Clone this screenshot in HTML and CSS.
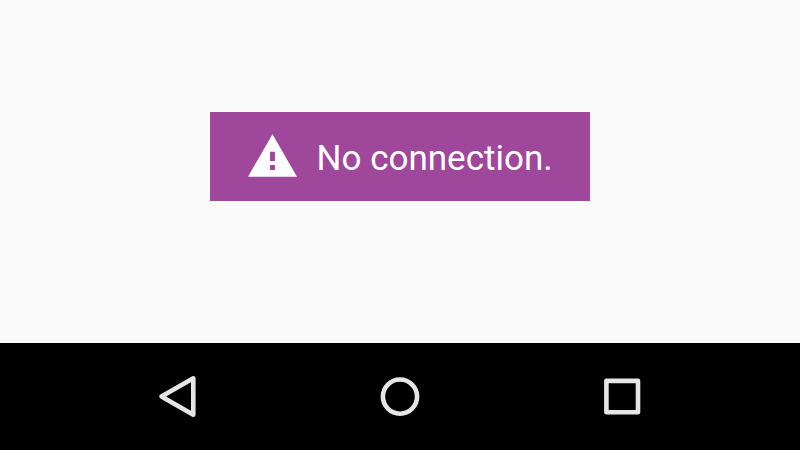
FILE: index.html
```html
<!DOCTYPE html>
<html lang="en">
<head>
<meta charset="utf-8">
<meta name="viewport" content="width=device-width, initial-scale=1">
<title>No connection</title>
<link rel="stylesheet" href="styles.css">
</head>
<body>
<main class="content">
  <div class="notice" role="alert">
    <svg class="notice-icon" viewBox="1 2 22 19" aria-hidden="true"><path d="M1 21h22L12 2 1 21zm12.1-3h-2.2v-2.2h2.2V18zm0-4h-2.2V9.8h2.2V14z"/></svg>
    <p class="notice-text">No connection.</p>
  </div>
</main>
<nav class="navbar" aria-label="System">
  <button class="nav-button" type="button" aria-label="Back"><svg viewBox="0 0 48 48"><path d="M39.3 5.3v36.4L7.5 23.5z"/></svg></button>
  <button class="nav-button" type="button" aria-label="Home"><svg viewBox="0 0 48 48"><circle cx="24" cy="23.6" r="17.1"/></svg></button>
  <button class="nav-button" type="button" aria-label="Recent apps"><svg viewBox="0 0 48 48"><rect x="8.4" y="7.9" width="31.6" height="31.4"/></svg></button>
</nav>
</body>
</html>
```
FILE: styles.css
```css
body {
  margin: 0;
  min-height: 100vh;
  display: flex;
  flex-direction: column;
  background: #fafafa;
  font-family: Roboto, sans-serif;
}

.content {
  flex: 1;
  display: flex;
  justify-content: center;
  align-items: flex-start;
  padding-top: 112px;
}

.notice {
  display: flex;
  align-items: flex-start;
  gap: 20px;
  padding: 22px 38px;
  background: #9f489b;
  color: #fff;
}

.notice-icon {
  width: 49px;
  height: 43px;
  fill: currentColor;
}

.notice-text {
  margin: 0;
  padding-top: 4px;
  font-size: 35px;
  line-height: 41px;
}

.navbar {
  display: flex;
  justify-content: center;
  gap: 174px;
  padding: 30px 0 29px;
  background: #000;
}

.nav-button {
  display: flex;
  padding: 0;
  border: 0;
  background: none;
}

.nav-button svg {
  width: 48px;
  height: 48px;
  fill: none;
  stroke: #e6e6e6;
  stroke-width: 4.6;
  stroke-linejoin: round;
}
```
